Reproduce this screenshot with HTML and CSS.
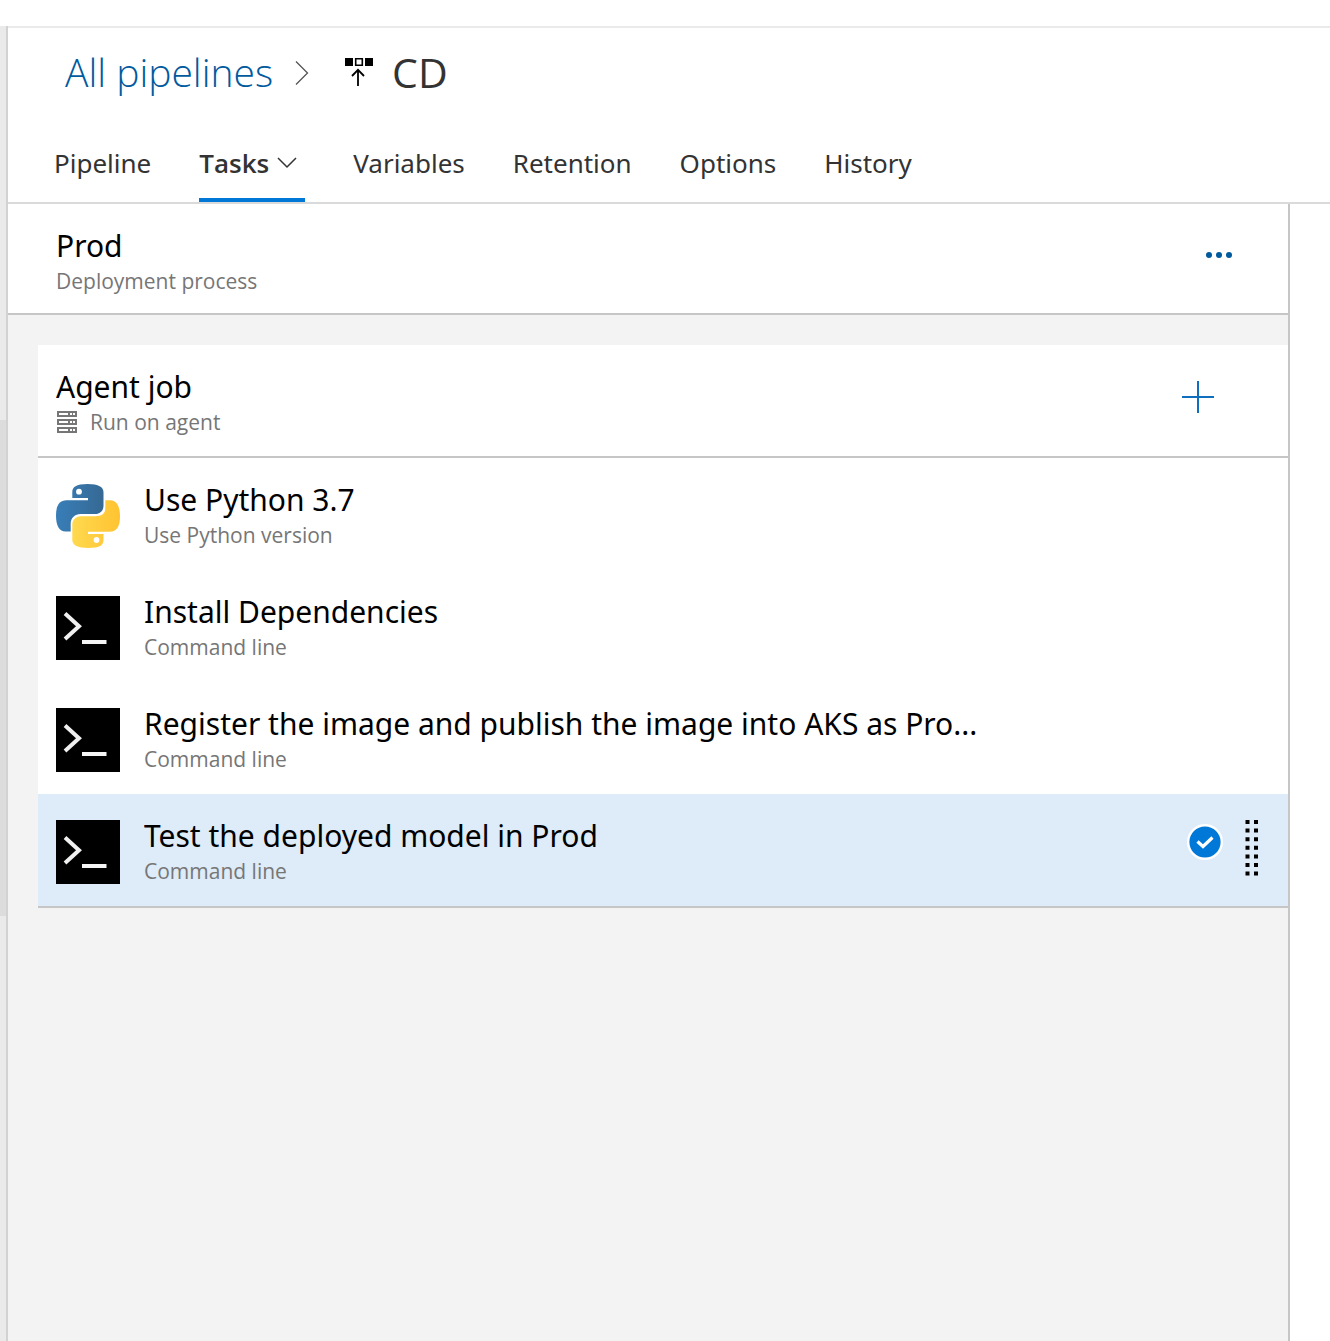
FILE: index.html
```html
<!DOCTYPE html>
<html lang="en">
<head>
<meta charset="utf-8">
<meta name="viewport" content="width=device-width, initial-scale=1">
<title>CD - Pipelines</title>
<link rel="stylesheet" href="styles.css">
</head>
<body>
<svg class="sprite" aria-hidden="true">
  <symbol id="cmd" viewBox="0 0 64 64">
    <rect width="64" height="64" fill="#000"/>
    <path d="M9 17.500L23 30.200L9 43" fill="none" stroke="#f0f0f0" stroke-width="4"/>
    <path d="M26 46H50.500" stroke="#f5f5f5" stroke-width="4"/>
  </symbol>
</svg>
<div class="app">
  <div class="rail"><div class="rail-thumb"></div></div>
  <div class="content">
    <header class="header">
      <nav class="breadcrumb" aria-label="Breadcrumb">
        <a class="crumb" href="#">All pipelines</a>
        <svg class="crumb-sep" width="14" height="26" viewBox="0 0 14 26" aria-hidden="true"><path d="M1 2.500L12.500 14L1 25.500" fill="none" stroke="#555" stroke-width="1.300"/></svg>
        <svg class="release-icon" width="30" height="30" viewBox="0 0 30 30" aria-hidden="true">
          <path d="M1 1h8v8H1zM21 1h8v8h-8z"/>
          <path d="M11.700 1.700h6.600v6.600h-6.600z" fill="none" stroke="#000" stroke-width="1.600"/>
          <path d="M14 29V13M8 19L14 12.800L20 19" fill="none" stroke="#000" stroke-width="1.800"/>
        </svg>
        <h1 class="title">CD</h1>
      </nav>
      <nav class="tabs" aria-label="Sections">
        <a class="tab" href="#">Pipeline</a>
        <a class="tab tab-active" href="#" aria-current="page">Tasks
          <svg width="20" height="12" viewBox="0 0 20 12" aria-hidden="true"><path d="M1 1L10 10L19 1" fill="none" stroke="#333" stroke-width="1.500"/></svg>
        </a>
        <a class="tab" href="#">Variables</a>
        <a class="tab" href="#">Retention</a>
        <a class="tab" href="#">Options</a>
        <a class="tab" href="#">History</a>
      </nav>
    </header>
    <div class="workspace">
      <main class="panel">
        <section class="row process">
          <div class="text">
            <h2 class="name">Prod</h2>
            <p class="kind">Deployment process</p>
          </div>
          <button class="icon-button more" type="button" aria-label="More actions">
            <svg width="28" height="8" viewBox="0 0 28 8" fill="#005a9e"><circle cx="4" cy="4" r="3"/><circle cx="14" cy="4" r="3"/><circle cx="24" cy="4" r="3"/></svg>
          </button>
        </section>
        <div class="jobs">
          <section class="row job">
            <div class="text">
              <h2 class="name">Agent job</h2>
              <p class="kind kind-agent">
                <svg width="21" height="22" viewBox="0 0 21 22" aria-hidden="true"><path d="M1 0h20v6H1zM1 8h20v6H1zM1 16h20v6H1z" fill="#767676"/><path d="M3 2h9v2H3zM14 2h2v2h-2zM17 2h2v2h-2zM3 10h9v2H3zM14 10h2v2h-2zM17 10h2v2h-2zM3 18h9v2H3zM14 18h2v2h-2zM17 18h2v2h-2z" fill="#fff"/></svg>
                Run on agent
              </p>
            </div>
            <button class="icon-button add" type="button" aria-label="Add a task">
              <svg width="32" height="32" viewBox="0 0 32 32"><path d="M0 16H32M16 0V32" stroke="#106ebe" stroke-width="2"/></svg>
            </button>
          </section>
          <ul class="tasks">
            <li class="row task">
              <svg class="task-icon" viewBox="0 0 64 64" aria-hidden="true">
                <defs>
                  <linearGradient id="blue" x1="0" y1="0" x2="1" y2="0"><stop offset="0" stop-color="#387eb8"/><stop offset="1" stop-color="#366994"/></linearGradient>
                  <linearGradient id="yellow" x1="0" y1="0" x2="1" y2="0"><stop offset="0" stop-color="#ffd94f"/><stop offset="1" stop-color="#ffc331"/></linearGradient>
                </defs>
                <path fill="url(#blue)" d="M31.700 0C20 0 16.300 3 16.300 8.200V14H32V16.200H10.500C3 16.200 0 22 0 31.500C0 42 3.500 47.500 9.500 47.500H14.700V39.500C14.700 34 19 30 24.500 30H39.500C44 30 47.500 26.500 47.500 22V8.200C47.500 3 42.500 0 31.700 0Z"/>
                <circle cx="23" cy="7.700" r="2.900" fill="#fff"/>
                <path fill="url(#yellow)" d="M32.300 64C44 64 47.500 61 47.500 56V50H32V47.800H53.500C61 47.800 64 42 64 32.500C64 22 60.500 16.200 54.500 16.200H49.300V24.500C49.300 30 45 32.200 39.500 32.200H24.500C20 32.200 16.300 36 16.300 40.500V56C16.300 61 21.500 64 32.300 64Z"/>
                <circle cx="40.500" cy="56" r="2.900" fill="#fff"/>
              </svg>
              <div class="text">
                <h3 class="name">Use Python 3.7</h3>
                <p class="kind">Use Python version</p>
              </div>
            </li>
            <li class="row task">
              <svg class="task-icon" aria-hidden="true"><use href="#cmd"/></svg>
              <div class="text">
                <h3 class="name">Install Dependencies</h3>
                <p class="kind">Command line</p>
              </div>
            </li>
            <li class="row task">
              <svg class="task-icon" aria-hidden="true"><use href="#cmd"/></svg>
              <div class="text">
                <h3 class="name">Register the image and publish the image into AKS as Pro...</h3>
                <p class="kind">Command line</p>
              </div>
            </li>
            <li class="row task task-selected">
              <svg class="task-icon" aria-hidden="true"><use href="#cmd"/></svg>
              <div class="text">
                <h3 class="name">Test the deployed model in Prod</h3>
                <p class="kind">Command line</p>
              </div>
              <div class="task-tools">
                <svg width="36" height="36" viewBox="0 0 36 36" role="img" aria-label="Selected"><circle cx="18" cy="18" r="18" fill="#fff"/><circle cx="18" cy="18" r="15.600" fill="#0078d7"/><path d="M10.500 17.500L16 22.500L25.500 13.500" fill="none" stroke="#fff" stroke-width="3.200"/></svg>
                <svg width="14" height="56" viewBox="0 0 14 56" aria-hidden="true"><path d="M2.500 0V56M11 0V56" stroke="#000" stroke-width="4" stroke-dasharray="4 4.600"/></svg>
              </div>
            </li>
          </ul>
        </div>
      </main>
      <aside class="details"></aside>
    </div>
  </div>
</div>
</body>
</html>
```
FILE: styles.css
```css
* {
  box-sizing: border-box;
}

body {
  margin: 0;
  background: #fff;
  color: #000;
  font-family: "Noto Sans", "Open Sans", sans-serif;
}

h1, h2, h3, p, ul {
  margin: 0;
  padding: 0;
  font-weight: 400;
}

.sprite {
  display: none;
}

.app {
  display: flex;
  min-height: 100vh;
  padding-top: 26px;
}

.rail {
  flex: none;
  width: 8px;
  padding-top: 394px;
  background: #eaeaea;
  border-right: 2px solid #d2d2d2;
}

.rail-thumb {
  height: 496px;
  background: #dcdcdc;
}

.content {
  display: flex;
  flex: 1;
  flex-direction: column;
  min-width: 0;
  border-top: 2px solid #eaeaea;
}

.header {
  border-bottom: 2px solid #dadada;
}

.breadcrumb {
  display: flex;
  align-items: center;
  height: 88px;
  padding-left: 57px;
  font-family: "Open Sans", "Noto Sans", sans-serif;
}

.crumb {
  color: #005a9e;
  font-size: 39px;
  font-weight: 300;
  line-height: 56px;
  text-decoration: none;
}

.crumb-sep {
  margin-left: 22px;
}

.release-icon {
  margin: 0 18px 0 35px;
}

.title {
  color: #333;
  font-size: 41px;
  line-height: 56px;
}

.tabs {
  display: flex;
  gap: 48px;
  padding-left: 46px;
}

.tab {
  display: flex;
  align-items: center;
  gap: 8px;
  height: 86px;
  padding-top: 11px;
  border-bottom: 4px solid transparent;
  color: #333;
  font-size: 26px;
  line-height: 36px;
  text-decoration: none;
}

.tab-active {
  padding-right: 8px;
  border-bottom-color: #0078d7;
  font-family: "Open Sans", "Noto Sans", sans-serif;
  font-weight: 600;
}

.workspace {
  display: flex;
  flex: 1;
}

.panel {
  display: flex;
  flex: 1;
  flex-direction: column;
  min-width: 0;
  border-right: 2px solid #c6c6c6;
}

.details {
  flex: none;
  width: 40px;
}

.row {
  display: flex;
  align-items: flex-start;
  padding: 21px 18px 20px;
}

.process {
  padding-bottom: 18px;
  padding-left: 48px;
  border-bottom: 2px solid #c6c6c6;
}

.jobs {
  flex: 1;
  padding: 30px 0 0 30px;
  background: #f3f3f3;
}

.job {
  background: #fff;
  border-bottom: 2px solid #c6c6c6;
}

.tasks {
  background: #fff;
  border-bottom: 2px solid #c6c6c6;
  list-style: none;
}

.task {
  gap: 24px;
  height: 112px;
}

.task-selected {
  background: #deebf8;
}

.task-icon {
  flex: none;
  width: 64px;
  height: 64px;
  margin-top: 5px;
}

.text {
  flex: 1;
  min-width: 0;
}

.name {
  overflow: hidden;
  font-size: 30px;
  line-height: 42px;
  text-overflow: ellipsis;
  white-space: nowrap;
}

.kind {
  color: #767676;
  font-family: "Open Sans", "Noto Sans", sans-serif;
  font-size: 21px;
  line-height: 28px;
}

.kind-agent {
  display: flex;
  align-items: center;
  gap: 13px;
}

.icon-button {
  display: flex;
  flex: none;
  padding: 0;
  background: none;
  border: 0;
}

.more {
  margin: 26px 37px 0 0;
}

.add {
  margin: 15px 56px 0 0;
}

.task-tools {
  display: flex;
  flex: none;
  gap: 22px;
  padding: 5px 11px 0 0;
}

.task-tools svg:first-child {
  margin-top: 4px;
}
```
